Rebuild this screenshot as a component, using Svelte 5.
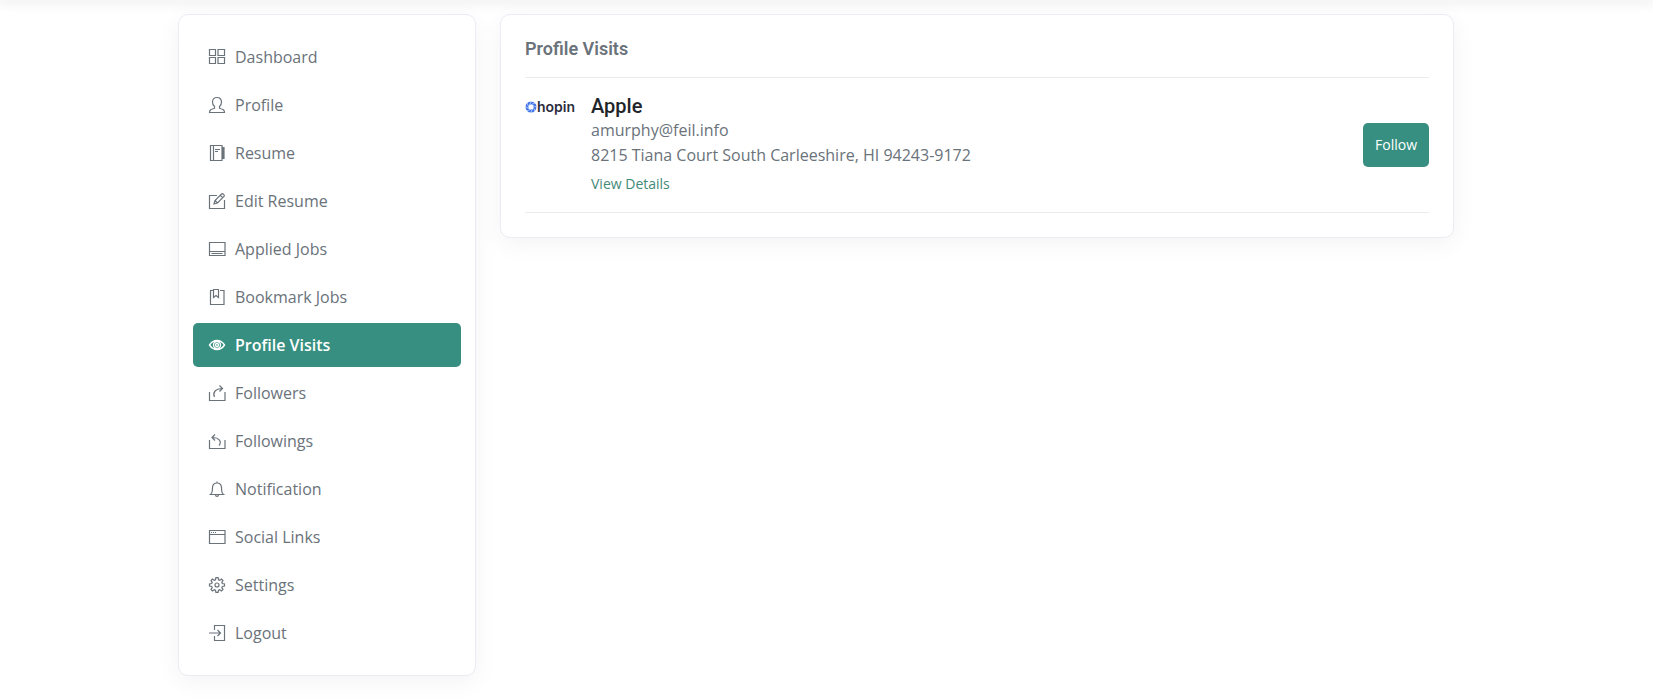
<script lang="ts">
  type MenuItem = { label: string; icon: string };

  const menu: MenuItem[] = [
    { label: 'Dashboard', icon: 'grid' },
    { label: 'Profile', icon: 'user' },
    { label: 'Resume', icon: 'agenda' },
    { label: 'Edit Resume', icon: 'pencil' },
    { label: 'Applied Jobs', icon: 'layout' },
    { label: 'Bookmark Jobs', icon: 'bookmark' },
    { label: 'Profile Visits', icon: 'eye' },
    { label: 'Followers', icon: 'share' },
    { label: 'Followings', icon: 'back' },
    { label: 'Notification', icon: 'bell' },
    { label: 'Social Links', icon: 'window' },
    { label: 'Settings', icon: 'gear' },
    { label: 'Logout', icon: 'exit' }
  ];

  // line icons on a 16px grid
  const icons: Record<string, string> = {
    grid: 'M.5.5h6v6h-6z M9 .5h6.500v6H9z M.5 8.500h6v6h-6z M9 8.500h6.500v6H9z',
    user: 'M.5 15.500h15c0-2.700-1.500-3.200-5-4.300V9.600c1.300-1 2-2.700 2-4.500C12.500 2.200 10.800.5 8 .5S3.500 2.200 3.500 5.100c0 1.800.7 3.500 2 4.500v1.600C2 12.300.5 12.800.5 15.500z',
    agenda: 'M1.500.5h11.500v15H1.500z M4.500.5v15 M6 4.500h5 M6 6.500h3 M13 2.500h2v11h-2 M14 3v10 M13 6.200h2.500 M13 9.800h2.500',
    pencil: 'M8 2.500H.5v13h15V7 M5 11l1-3.500L12.800.8c.8-.8 3.200 1.500 2.400 2.400L8.500 10z M6 7.500L8.500 10 M11.300 2.300l2.400 2.400',
    layout: 'M.5 1.500h15.500v13H.5z M.5 10.500h15.500 M2.500 12.500h11',
    bookmark: 'M4 1.500H1.500v14h13.500v-14H11 M4.500.5h5v8L7 6.500 4.500 8.500z',
    eye: 'M.5 8C2.300 5.200 5 3.500 8 3.500s5.700 1.700 7.500 4.500c-1.800 2.800-4.500 4.500-7.500 4.500S2.300 10.800.5 8z M4.500 8a3.500 3.500 0 1 0 7 0a3.500 3.500 0 1 0-7 0 M6.500 8a1.500 1.500 0 1 0 3 0a1.500 1.500 0 1 0-3 0',
    share: 'M.5 7v8.500h15.500V7 M5.500 12C3.500 8 6 3.500 13.500 3.500 M10.500.5l3 3-3 3',
    back: 'M.5 7v8.500h15.500V7 M10 12.500C13 9 10.500 4.500 3 4.500 M6 1.500l-3 3 3 3',
    bell: 'M1.500 13.500h13c-1.300-1-1.700-2-1.800-4l-.2-3C12.300 3.500 10.500 2 8 2S3.700 3.500 3.500 6.500l-.2 3c-.1 2-.5 3-1.800 4z M8 2V.5 M6.500 14c.2 1.800 2.800 1.800 3 0',
    window: 'M.5 1.500h15.500v13H.5z M.5 5.500h15 M2 3.500h1 M4 3.500h1 M6 3.500h1',
    gear: 'M6.900.6h2.200l.4 2.100 1.200.5 1.800-1.200L14 3.500l-1.200 1.800.5 1.200 2.200.4v2.200l-2.200.4-.5 1.200L14 12.500 12.500 14l-1.800-1.200-1.200.5-.4 2.100H6.900l-.4-2.100-1.200-.5L3.500 14 2 12.500l1.200-1.800-.5-1.200L.5 9.100V6.900l2.200-.4.5-1.200L2 3.500 3.500 2l1.800 1.200 1.200-.5z M6 8a2 2 0 1 0 4 0a2 2 0 1 0-4 0',
    exit: 'M5.500 5V.5h10v15h-10V11 M0 8h11 M8.500 5l3 3-3 3'
  };

  let active = $state('Profile Visits');
  let following = $state(false);

  function select(e: MouseEvent, label: string) {
    e.preventDefault();
    active = label;
  }
</script>

<header class="topbar"></header>

<div class="page">
  <main class="container">
    <nav class="card sidebar" aria-label="Account">
      <ul>
        {#each menu as item}
          <li>
            <a
              href="#{item.icon}"
              class:active={active === item.label}
              aria-current={active === item.label ? 'page' : undefined}
              onclick={(e) => select(e, item.label)}
            >
              <svg class="icon" viewBox="0 0 16 16" aria-hidden="true">
                <path d={icons[item.icon]} />
              </svg>
              {item.label}
            </a>
          </li>
        {/each}
      </ul>
    </nav>

    <section class="card content">
      <h1>Profile Visits</h1>

      <article class="visit">
        <div class="logo">
          <svg viewBox="0 0 12 12" aria-hidden="true">
            <circle cx="6" cy="6" r="4" />
            <path d="M6.500 0L4.500 4 M10.600 1.800L6.500 3.500 M12 6.500L8 4.500 M10.200 10.600L8.500 6.500 M5.500 12L7.500 8 M1.400 10.200L5.500 8.500 M0 5.500L4 7.500 M1.800 1.400L3.500 5.500" />
          </svg>
          <span>hopin</span>
        </div>
        <div class="details">
          <h2>Apple</h2>
          <p>amurphy@feil.info</p>
          <p>8215 Tiana Court South Carleeshire, HI 94243-9172</p>
          <a href="#details">View Details</a>
        </div>
        <button type="button" aria-pressed={following} onclick={() => (following = !following)}>
          Follow
        </button>
      </article>
    </section>
  </main>
</div>

<style>
  :global(body) {
    margin: 0;
    background: #fff;
    color: #6a727a;
    font-family: 'Open Sans', sans-serif;
    font-size: 16px;
  }

  .topbar {
    height: 0;
    box-shadow: 0 0 12px 2px rgba(0, 0, 0, 0.14);
  }

  .page {
    padding-right: 21px;
  }

  .container {
    display: flex;
    align-items: flex-start;
    gap: 24px;
    box-sizing: border-box;
    max-width: 1300px;
    margin: 0 auto;
    padding: 14px 12px 23px;
  }

  .card {
    box-sizing: border-box;
    background: #fff;
    border: 1px solid #e9ecf1;
    border-radius: 10px;
    box-shadow: 0 6px 24px rgba(0, 0, 0, 0.05);
  }

  .sidebar {
    flex: 0 0 298px;
    padding: 20px 14px;
  }

  ul {
    display: flex;
    flex-direction: column;
    gap: 4px;
    margin: 0;
    padding: 0;
    list-style: none;
  }

  li a {
    display: flex;
    align-items: center;
    gap: 10px;
    height: 44px;
    padding: 0 16px;
    border-radius: 5px;
    color: inherit;
    font-weight: 500;
    text-decoration: none;
  }

  li a.active {
    background: #368f80;
    color: #fff;
    font-weight: 600;
  }

  .icon {
    flex: none;
    width: 16px;
    height: 16px;
    overflow: visible;
    fill: none;
    stroke: currentColor;
    stroke-width: 1.2;
  }

  .active .icon {
    stroke-width: 1.4;
  }

  .content {
    flex: 1;
    min-width: 0;
    padding: 23px 24px 24px;
  }

  h1,
  h2 {
    margin: 0;
    font-family: Roboto, sans-serif;
    font-weight: 500;
  }

  h1 {
    padding-bottom: 18px;
    border-bottom: 1px solid #e9ebee;
    font-size: 18px;
    font-weight: 600;
    line-height: 21px;
  }

  .visit {
    display: flex;
    align-items: flex-start;
    gap: 16px;
    padding: 16px 0;
    border-bottom: 1px solid #e9ebee;
  }

  .logo {
    display: flex;
    align-items: center;
    width: 50px;
    height: 26px;
    color: #2b2d3d;
    font-family: Inter, sans-serif;
    font-size: 14px;
    font-weight: 600;
    line-height: 16px;
  }

  .logo svg {
    flex: none;
    width: 12px;
    height: 12px;
    fill: none;
    stroke: #3a70ea;
    stroke-width: 3;
  }

  .logo path {
    stroke: #fff;
    stroke-width: 0.6;
  }

  .details {
    flex: 1;
    min-width: 0;
  }

  h2 {
    color: #212529;
    font-size: 20px;
    line-height: 24px;
  }

  p {
    margin: 0;
    line-height: 25px;
  }

  .details a {
    display: inline-block;
    margin-top: 4px;
    color: #428a78;
    font-size: 14px;
    line-height: 24px;
    text-decoration: none;
  }

  button {
    align-self: center;
    height: 44px;
    padding: 0 12px 2px;
    border: 0;
    border-radius: 5px;
    background: #368f80;
    color: #fff;
    font-family: inherit;
    font-size: 14px;
    font-weight: 500;
  }
</style>
